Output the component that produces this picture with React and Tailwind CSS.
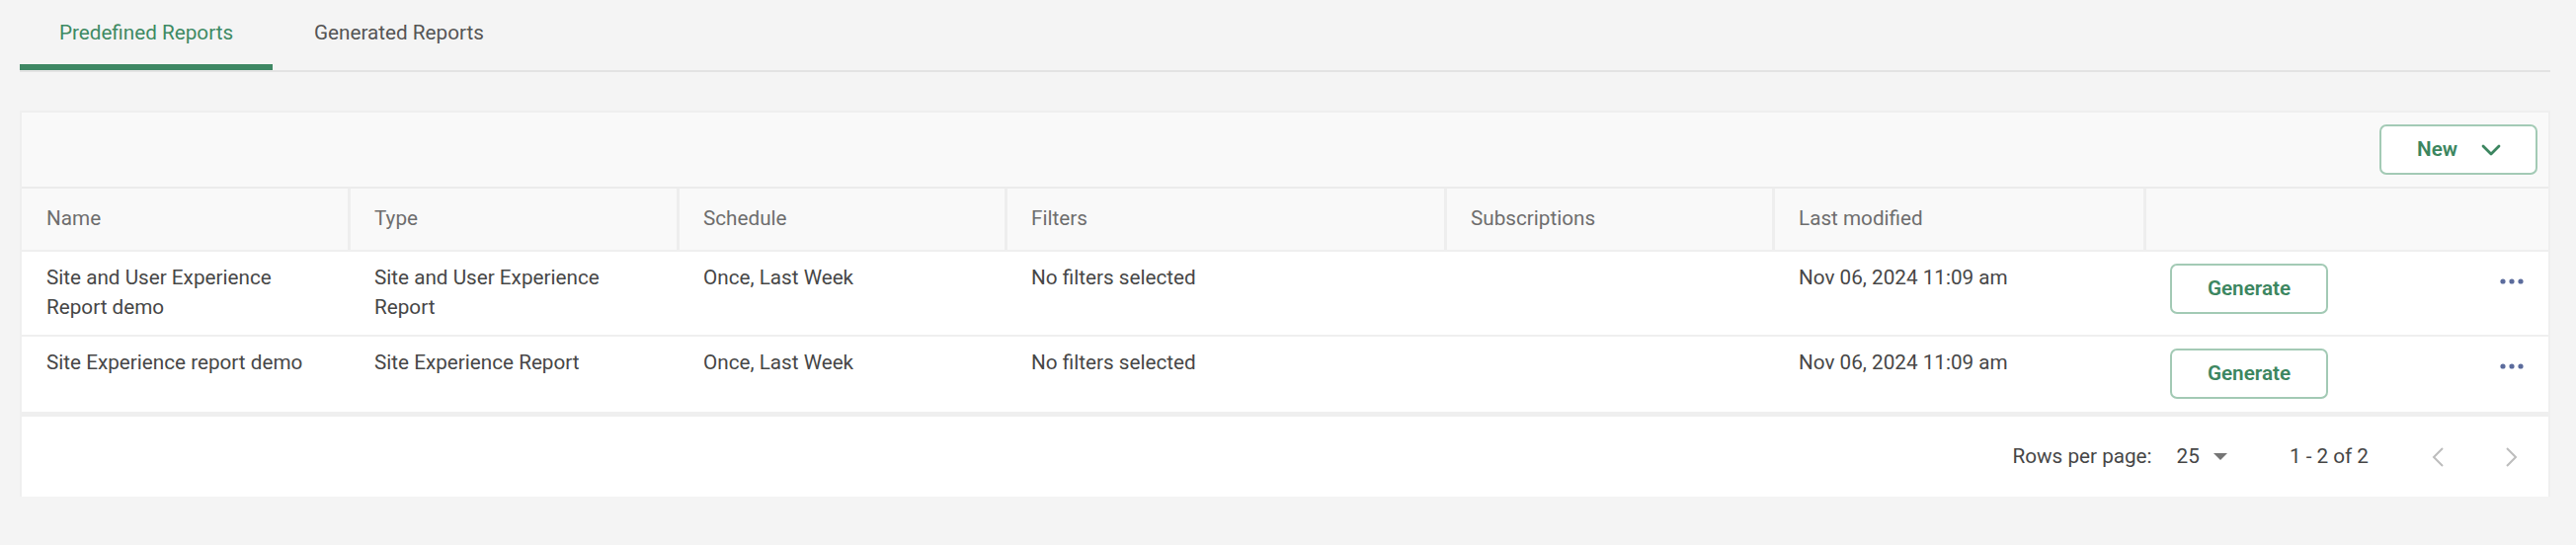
import React from "react";

const columns = [
  { label: "Name", first: true },
  { label: "Type" },
  { label: "Schedule" },
  { label: "Filters" },
  { label: "Subscriptions" },
  { label: "Last modified" },
  { label: "" },
];

const reports = [
  {
    name: "Site and User Experience Report demo",
    type: "Site and User Experience Report",
    schedule: "Once, Last Week",
    filters: "No filters selected",
    subscriptions: "",
    modified: "Nov 06, 2024 11:09 am",
  },
  {
    name: "Site Experience report demo",
    type: "Site Experience Report",
    schedule: "Once, Last Week",
    filters: "No filters selected",
    subscriptions: "",
    modified: "Nov 06, 2024 11:09 am",
  },
];

const grid =
  "grid grid-cols-[330px_333px_332px_445px_332px_376px_1fr]";

const ChevronDown = () => (
  <svg width="20" height="12" viewBox="0 0 20 12" fill="none">
    <path d="M2 2l8 8 8-8" stroke="#3c8660" strokeWidth="2.8" strokeLinecap="round" strokeLinejoin="round" />
  </svg>
);

const MoreDots = () => (
  <svg width="24" height="6" viewBox="0 0 24 6">
    <circle cx="3" cy="3" r="2.6" fill="#5b6b9c" />
    <circle cx="12" cy="3" r="2.6" fill="#5b6b9c" />
    <circle cx="21" cy="3" r="2.6" fill="#5b6b9c" />
  </svg>
);

const Pager = ({ dir }) => (
  <svg width="13" height="22" viewBox="0 0 13 22" fill="none">
    <path
      d={dir === "left" ? "M11 2L2 11l9 9" : "M2 2l9 9-9 9"}
      stroke="#bdbdbd"
      strokeWidth="2"
    />
  </svg>
);

const App = () => {
  return (
    <div className="min-h-[552px] bg-[#f4f4f4] pl-[20px] pr-[26px] font-['Roboto',sans-serif] text-[20.7px]">
      {/* Tabs */}
      <div className="flex border-b-2 border-[#e3e3e3]">
        <div className="w-[256px] h-[71px] pt-[18px] flex justify-center leading-[30px] text-[#3e8a63] border-b-[6px] border-[#3e8763]">
          Predefined Reports
        </div>
        <div className="w-[256px] h-[71px] pt-[18px] flex justify-center leading-[30px] text-[#555555] border-b-[6px] border-transparent">
          Generated Reports
        </div>
      </div>

      {/* Tarjeta principal */}
      <div className="mt-[39px] bg-white border-2 border-[#efefef] border-b-0">
        {/* Toolbar */}
        <div className="h-[77px] bg-[#f9f9f9] flex items-center justify-end pr-[11px] border-b-2 border-[#ececec]">
          <button className="h-[51px] w-[160px] flex items-center pl-[36px] gap-[24px] bg-white border-2 border-[#a3cab5] rounded-[7px] text-[#3c8660] font-semibold leading-none">
            New
            <ChevronDown />
          </button>
        </div>

        {/* Encabezado */}
        <div className={`${grid} h-[64px] bg-[#f9f9f9] border-b-2 border-[#efefef] text-[#6e6e6e]`}>
          {columns.map((col, i) => (
            <div
              key={i}
              className={
                col.first
                  ? "flex items-center pl-[25px]"
                  : "flex items-center pl-[24px] border-l-[3px] border-[#eeeeee]"
              }
            >
              {col.label}
            </div>
          ))}
        </div>

        {/* Filas */}
        {reports.map((r, i) => (
          <div key={i} className={`${grid} border-b-2 border-[#efefef] text-[#474747] leading-[30px]`}>
            <div className="pt-[11px] pb-[13px] pl-[25px] pr-[24px]">{r.name}</div>
            <div className="pt-[11px] pb-[13px] pl-[27px] pr-[24px]">{r.type}</div>
            <div className="pt-[11px] pb-[13px] pl-[27px] pr-[24px]">{r.schedule}</div>
            <div className="pt-[11px] pb-[13px] pl-[27px] pr-[24px]">{r.filters}</div>
            <div className="pt-[11px] pb-[13px] pl-[27px] pr-[24px]">{r.subscriptions}</div>
            <div className="pt-[11px] pb-[13px] pl-[27px] pr-[24px]">{r.modified}</div>
            <div className="pt-[12px] pb-[13px] pl-[27px] pr-[25px] flex items-start justify-between">
              <button className="h-[51px] w-[160px] bg-white border-2 border-[#a3cab5] rounded-[7px] text-[#3c8660] font-semibold leading-none">
                Generate
              </button>
              <div className="pt-[15px]">
                <MoreDots />
              </div>
            </div>
          </div>
        ))}

        {/* Footer */}
        <div className="h-[84px] border-t-[3px] border-[#efefef] flex items-center justify-end text-[#474747]">
          <span>Rows per page:</span>
          <span className="ml-[25px]">25</span>
          <svg className="ml-[14px]" width="14" height="7" viewBox="0 0 14 7">
            <path d="M0 0h14L7 7z" fill="#757575" />
          </svg>
          <span className="ml-[63px]">1 - 2 of 2</span>
          <span className="ml-[64px] flex">
            <Pager dir="left" />
          </span>
          <span className="ml-[61px] mr-[31px] flex">
            <Pager dir="right" />
          </span>
        </div>
      </div>
    </div>
  );
};

export default App;
